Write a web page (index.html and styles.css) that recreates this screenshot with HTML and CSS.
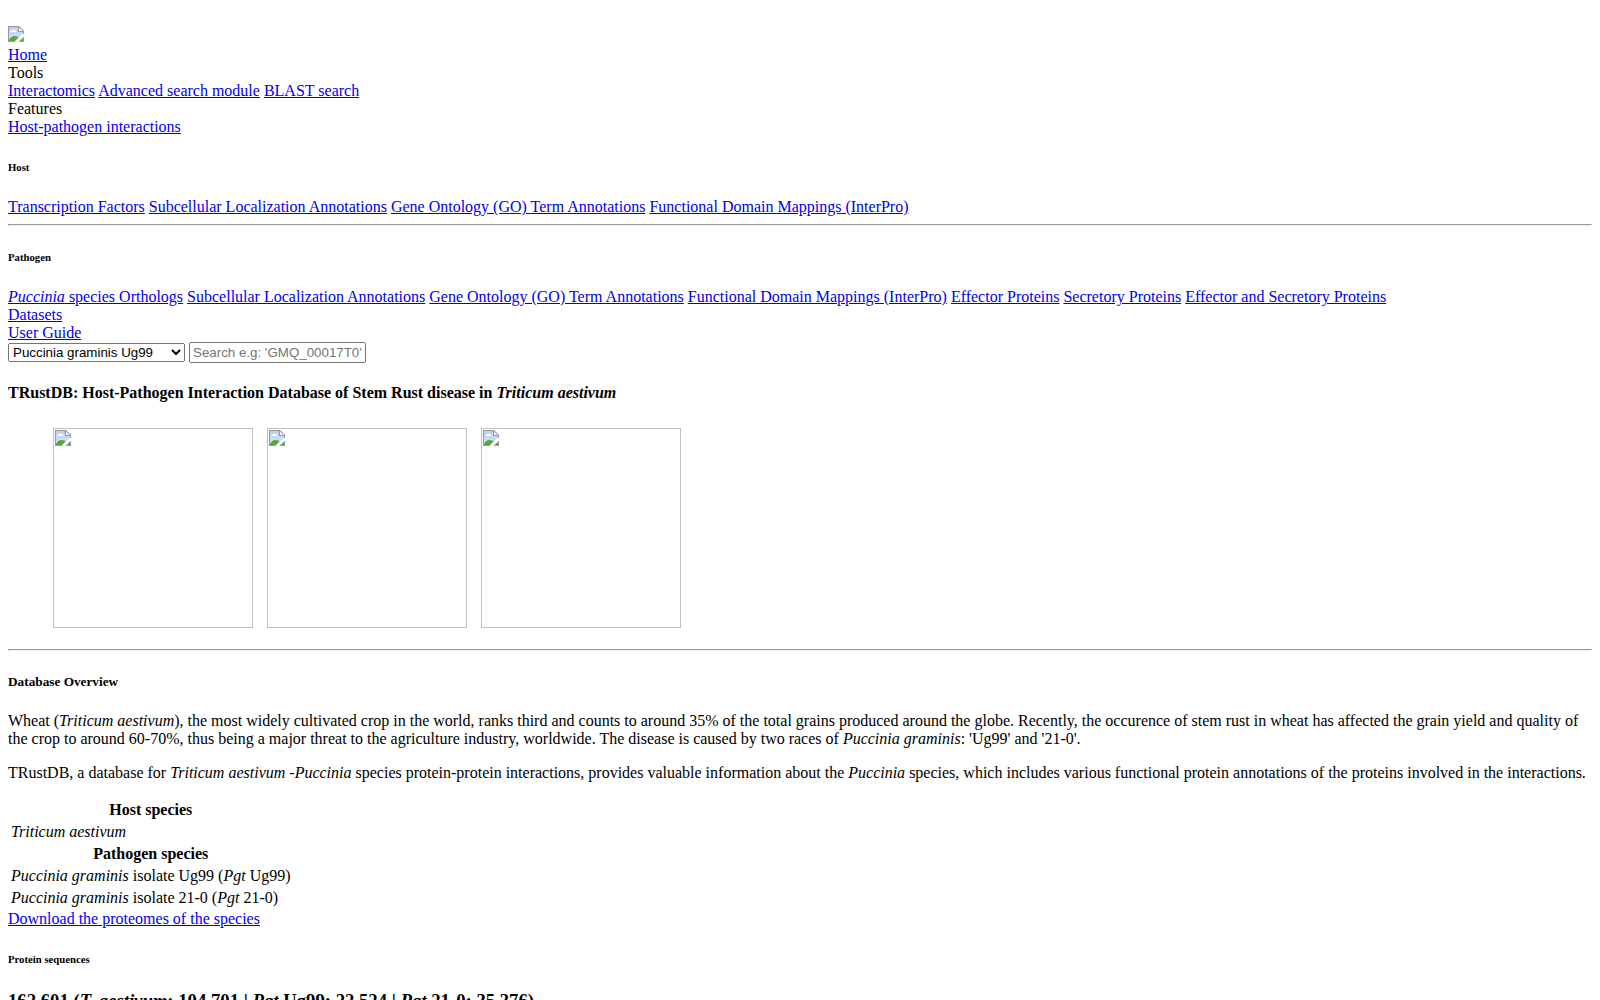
FILE: index.html
```html
<!DOCTYPE html>
<html lang="en">
<head>
<meta charset="utf-8">
<title>TRustDB</title>
<link rel="stylesheet" href="styles.css">
</head>
<body>
<svg width="0" height="0" class="defs" aria-hidden="true">
  <linearGradient id="sky" x1="0" y1="0" x2="0" y2="1">
    <stop offset="0" stop-color="#b9cef5"/>
    <stop offset="1" stop-color="#d6e2fa"/>
  </linearGradient>
  <symbol id="broken" viewBox="0 0 16 16">
    <path d="M0 0H11L16 5V16H0Z" fill="#999"/>
    <path d="M1 1H10V6H15V15H1Z" fill="url(#sky)"/>
    <path d="M11 1.400L14.600 5H11Z" fill="#fff"/>
    <path d="M2 6Q2 4.500 4 4.500Q4.500 3 6 3.500Q7 4 7 4.600Q8.500 4.800 8.500 6Z" fill="#fff"/>
    <path d="M1 15V14Q3 10 6.500 10Q10 10 12 13L15 12V15Z" fill="#54a935"/>
    <path d="M16 8H14.500L7 15V16H10.500L16 10.500Z" fill="#fff"/>
  </symbol>
</svg>
<header>
  <a class="logo" href="#" aria-label="TRustDB"><svg class="icon"><use href="#broken"/></svg></a>
  <nav>
    <div><a href="#">Home</a></div>
    <div>Tools</div>
    <div><a href="#">Interactomics</a> <a href="#">Advanced search module</a> <a href="#">BLAST search</a></div>
    <div>Features</div>
    <div><a href="#">Host-pathogen interactions</a></div>
    <h6>Host</h6>
    <div><a href="#">Transcription Factors</a> <a href="#">Subcellular Localization Annotations</a> <a href="#">Gene Ontology (GO) Term Annotations</a> <a href="#">Functional Domain Mappings (InterPro)</a></div>
    <hr>
    <h6>Pathogen</h6>
    <div><a href="#"><i>Puccinia</i> species Orthologs</a> <a href="#">Subcellular Localization Annotations</a> <a href="#">Gene Ontology (GO) Term Annotations</a> <a href="#">Functional Domain Mappings (InterPro)</a> <a href="#">Effector Proteins</a> <a href="#">Secretory Proteins</a> <a href="#">Effector and Secretory Proteins</a></div>
    <div><a href="#">Datasets</a></div>
    <div><a href="#">User Guide</a></div>
  </nav>
  <form>
    <select class="field" aria-label="Species"><option>Puccinia graminis Ug99</option><option>Puccinia graminis 21-0</option></select>
    <input class="field" type="text" aria-label="Search" placeholder="Search e.g: 'GMQ_00017T0'">
  </form>
</header>
<main>
  <h4>TRustDB: Host-Pathogen Interaction Database of Stem Rust disease in <i>Triticum aestivum</i></h4>
  <div class="gallery">
    <div class="photo"><svg class="icon"><use href="#broken"/></svg></div>
    <div class="photo"><svg class="icon"><use href="#broken"/></svg></div>
    <div class="photo"><svg class="icon"><use href="#broken"/></svg></div>
  </div>
  <hr>
  <h5>Database Overview</h5>
  <p>Wheat (<i>Triticum aestivum</i>), the most widely cultivated crop in the world, ranks third and counts to around 35% of the total grains produced around the globe. Recently, the occurence of stem rust in wheat has affected the grain yield and quality of the crop to around 60-70%, thus being a major threat to the agriculture industry, worldwide. The disease is caused by two races of <i>Puccinia graminis</i>: 'Ug99' and '21-0'.</p>
  <p>TRustDB, a database for <i>Triticum aestivum</i> -<i>Puccinia</i> species protein-protein interactions, provides valuable information about the <i>Puccinia</i> species, which includes various functional protein annotations of the proteins involved in the interactions.</p>
  <table>
    <tr><th>Host species</th></tr>
    <tr><td><i>Triticum aestivum</i></td></tr>
    <tr><th>Pathogen species</th></tr>
    <tr><td><i>Puccinia graminis</i> isolate Ug99 (<i>Pgt</i> Ug99)</td></tr>
    <tr><td><i>Puccinia graminis</i> isolate 21-0 (<i>Pgt</i> 21-0)</td></tr>
  </table>
  <a href="#">Download the proteomes of the species</a>
  <h6>Protein sequences</h6>
  <h3>162,601 (<i>T. aestivum</i>: 104,701 | <i>Pgt</i> Ug99: 22,524 | <i>Pgt</i> 21-0: 35,376)</h3>
</main>
</body>
</html>
```
FILE: styles.css
```css
body {
  margin: 8px;
  font-family: "Liberation Serif", "Times New Roman", serif;
  font-size: 16px;
}

a {
  color: #0000ee;
}

.defs {
  position: absolute;
}

.icon {
  display: block;
  width: 16px;
  height: 16px;
}

header {
  padding-top: 18px;
}

.logo {
  display: block;
  width: 16px;
  padding-bottom: 4px;
}

.field {
  box-sizing: border-box;
  width: 177px;
}

.gallery {
  display: flex;
  gap: 14px;
  padding: 5px 45px 13px;
}

.photo {
  box-sizing: border-box;
  width: 200px;
  height: 200px;
  padding: 1px;
  border: 1px solid #c0c0c0;
}
```
